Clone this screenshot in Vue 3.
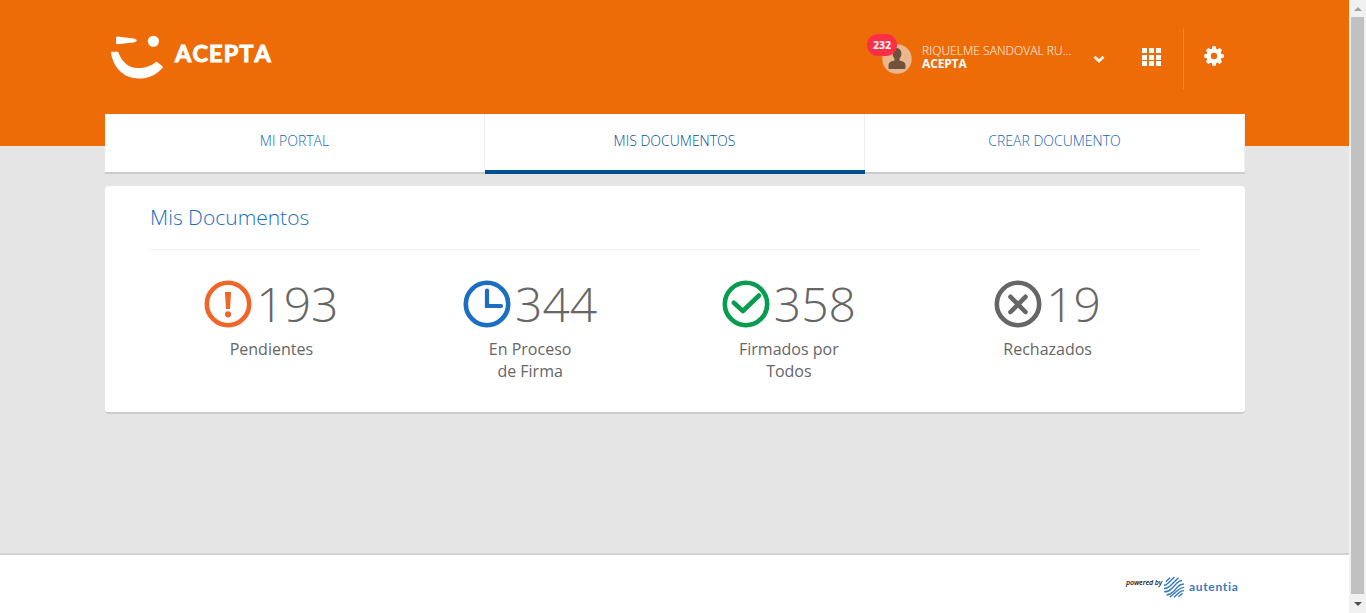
<script setup>
const tabs = [
  { label: 'MI PORTAL', active: false },
  { label: 'MIS DOCUMENTOS', active: true },
  { label: 'CREAR DOCUMENTO', active: false },
]
const stats = [
  { icon: 'alert', value: 193, lines: ['Pendientes'], color: '#f26529' },
  { icon: 'clock', value: 344, lines: ['En Proceso', 'de Firma'], color: '#1b6ec2' },
  { icon: 'check', value: 358, lines: ['Firmados por', 'Todos'], color: '#089c50' },
  { icon: 'cross', value: 19, lines: ['Rechazados'], color: '#666666' },
]
const gearTeeth = [0, 45, 90, 135, 180, 225, 270, 315]
const gridCells = [0, 1, 2, 3, 4, 5, 6, 7, 8]
</script>

<template>
  <div class="window">
    <div class="page">
      <header class="header">
        <div class="bar">
          <div class="brand">
            <svg class="smile" width="54" height="46" viewBox="0.8 0.5 54 46" fill="#fff">
              <path d="M6 4 Q6 3 7.5 3.1 L23 4.9 Q26.5 5.4 26.5 7 Q26.5 8.6 23 9 L7 10.7 Q5.8 10.7 5.8 9.5 Z" />
              <circle cx="43.2" cy="7.8" r="5.6" />
              <path d="M1.5 18.2 H7 Q8 18.2 8.3 19.3 C12 29 18.5 34.6 27.5 34.6 C35 34.6 41 32.3 45.3 28.8 Q46.5 27.9 47.5 28.9 L52 32.5 Q53 33.5 52 34.7 C46 41.5 37.5 45.2 28.5 45 C14 44.8 3.5 35 .9 20 Q.5 18.2 1.5 18.2 Z" />
            </svg>
            <span class="wordmark">ACEPTA</span>
          </div>
          <div class="user">
            <div class="avatar">
              <svg width="30" height="30" viewBox="0 0 30 30">
                <circle cx="15" cy="15" r="14.7" fill="#ebb78f" />
                <ellipse cx="15" cy="9.8" rx="4.4" ry="5.7" fill="#70513b" />
                <path d="M12.5 13 H17.5 V16.5 L21 17.4 Q23.5 18.4 23.5 22 V24 Q23.5 25 22.5 25 H7.5 Q6.5 25 6.5 24 V22 Q6.5 18.4 9 17.4 L12.5 16.5 Z" fill="#70513b" />
              </svg>
              <span class="badge">232</span>
            </div>
            <div class="names">
              <span class="name">RIQUELME SANDOVAL RU...</span>
              <strong>ACEPTA</strong>
            </div>
            <svg class="chevron" width="12" height="9" viewBox="0 0 12 9">
              <path d="M1.5 1.8 L6 6 L10.5 1.8" fill="none" stroke="#fbeee4" stroke-width="2.9" />
            </svg>
          </div>
          <div class="apps"><i v-for="n in gridCells" :key="n"></i></div>
          <div class="settings">
            <svg width="20" height="20" viewBox="-10 -10 20 20">
              <g fill="#fff">
                <path v-for="a in gearTeeth" :key="a" d="M-2.5 -6 L-1.6 -9.8 H1.6 L2.5 -6 Z" :transform="`rotate(${a})`" />
              </g>
              <circle r="5.4" fill="none" stroke="#fff" stroke-width="4.4" />
            </svg>
          </div>
        </div>
      </header>
      <main class="content">
        <nav class="tabs">
          <a v-for="t in tabs" :key="t.label" class="tab" :class="{ active: t.active }">{{ t.label }}</a>
        </nav>
        <section class="card">
          <h1>Mis Documentos</h1>
          <div class="stats">
            <div v-for="s in stats" :key="s.icon" class="stat">
              <div class="figure">
                <svg width="48" height="48" viewBox="0 0 48 48" fill="none" :stroke="s.color" stroke-width="4.6" stroke-linecap="round" stroke-linejoin="round">
                  <circle cx="24" cy="24" r="21.2" />
                  <g v-if="s.icon === 'alert'" :fill="s.color" stroke="none">
                    <path d="M20.9 12 H27.1 L26 29 H22 Z" />
                    <circle cx="24" cy="34.3" r="3.1" />
                  </g>
                  <path v-else-if="s.icon === 'clock'" d="M24 10.5 V26 H38" stroke-width="4.2" stroke-linejoin="miter" />
                  <path v-else-if="s.icon === 'check'" d="M11.8 22.8 L20.9 31 L37 15.5" />
                  <path v-else d="M16.5 16.8 L31.5 32 M31.5 16.8 L16.5 32" />
                </svg>
                <span class="number">{{ s.value }}</span>
              </div>
              <div v-for="l in s.lines" :key="l" class="label">{{ l }}</div>
            </div>
          </div>
        </section>
      </main>
      <footer class="footer">
        <div class="powered">
          <span class="by">powered by</span>
          <svg class="print" width="22" height="22" viewBox="0 0 22 22" fill="none" stroke="#3278bd" stroke-width="1.4">
            <path d="M3 5.5 L7 1.8 M1 9.3 Q3 9.3 5 7.2 L11.5 1 M1 12.5 Q4.5 12.5 7 10 L15.5 1.8 M1.2 15.8 Q5.5 16 8.5 12.7 L14 7 Q16.5 4.6 19 4.5 M3.5 19 Q7.5 18.8 10.5 15.6 L14.5 11 Q17 8.1 20.8 8 M7 21 L15.5 13.8 Q18 11.4 21.2 11.4 M11 21.3 L16.5 16.3 Q18.5 14.5 21 14.6 M15.5 20.8 L19.5 17.3" />
          </svg>
          <span class="autentia">autentia</span>
        </div>
      </footer>
    </div>
    <div class="scrollbar">
      <div class="arrow"><i class="up"></i></div>
      <div class="thumb"></div>
      <div class="arrow"><i class="down"></i></div>
    </div>
  </div>
</template>

<style>
body { margin: 0; overflow: hidden; }
</style>

<style scoped>
* { box-sizing: border-box; }
.window { display: flex; height: 613px; font-family: "Open Sans", "Noto Sans", sans-serif; }
.page { width: 1349px; display: flex; flex-direction: column; background: #e5e5e5; }
.header { height: 146px; flex: none; background: #ed6c07; }
.bar { width: 1140px; height: 114px; margin-left: 105px; display: flex; align-items: flex-start; color: #fff; }
.brand { display: flex; width: 762px; padding: 34px 0 0 6px; }
.wordmark { font: 700 23.5px/39px Lato, sans-serif; margin-left: 10px; letter-spacing: 1.1px; font-kerning: none; -webkit-text-stroke: 1px #fff; stroke-linejoin: round; }
.user { display: flex; width: 275px; padding: 34px 0 0 15px; }
.avatar { position: relative; padding: 10px 0 0; height: 40px; width: 30px; }
.badge { position: absolute; left: -15px; top: 0; width: 30px; height: 22px; border-radius: 11px; background: #fb3048; font-size: 10.5px; font-weight: 700; line-height: 22px; text-align: center; }
.names { width: 150px; margin: 10px 0 0 10px; font-size: 12px; line-height: 13px; }
.name { display: block; white-space: nowrap; font-weight: 300; letter-spacing: .03px; }
.names strong { display: block; font-weight: 700; letter-spacing: -.15px; }
.chevron { margin: 21px 0 0 21px; }
.apps { display: grid; grid-template-columns: repeat(3, 5px); grid-auto-rows: 5px; column-gap: 2px; row-gap: 1.5px; margin-top: 48px; width: 41px; }
.apps i { background: #fff; }
.settings { width: 60px; height: 60px; margin-top: 29px; border-left: 1px solid #f1893a; padding: 17px 0 0 20px; }
.content { width: 1140px; margin: -32px 0 0 105px; flex: 1; }
.tabs { display: flex; height: 60px; }
.tab { flex: 1; background: #fff; border-bottom: 2px solid #ccc; box-shadow: inset -1px 0 #eee; padding-right: 1px; text-align: center; font-size: 14px; font-weight: 300; line-height: 54px; color: #1565b5; }
.tab.active { color: #00528f; border-bottom: 4px solid #00508f; }
.card { height: 228px; margin-top: 12px; padding: 0 45px; background: #fff; border-radius: 4px; border-bottom: 2px solid #ccc; }
h1 { margin: 0; height: 64px; border-bottom: 1px solid #eee; font-size: 21px; line-height: 63px; font-weight: 300; color: #1b6ec2; }
.stats { display: flex; width: 1035px; margin-left: -8px; padding-top: 25px; }
.stat { flex: 1; text-align: center; color: #666; }
.figure { display: flex; justify-content: center; height: 63px; padding-top: 5px; }
.number { font-size: 48px; line-height: 47px; font-weight: 300; margin-left: 4px; }
.label { font-size: 16px; line-height: 22px; }
.footer { height: 60px; flex: none; background: #fff; border-top: 2px solid #d3d3d3; }
.powered { display: flex; padding: 21px 0 0 1126px; }
.by { width: 37px; font-size: 7px; line-height: 13px; font-style: italic; font-weight: 600; letter-spacing: -.1px; color: #111; white-space: nowrap; }
.autentia { margin-left: 4px; font: 700 12px/21px Lato, sans-serif; letter-spacing: .7px; color: #3b7abc; }
.scrollbar { width: 17px; background: #f1f1f1; display: flex; flex-direction: column; }
.arrow { height: 17px; display: flex; justify-content: center; align-items: center; }
.arrow i { border: 4px solid transparent; border-top-width: 0; border-bottom-width: 0; }
.arrow .up { border-bottom: 4px solid #a3a3a3; }
.arrow .down { border-top: 4px solid #505050; }
.thumb { width: 13px; height: 577px; margin-left: 2px; background: #c1c1c1; }
.scrollbar .arrow:last-child { height: 19px; }
</style>
